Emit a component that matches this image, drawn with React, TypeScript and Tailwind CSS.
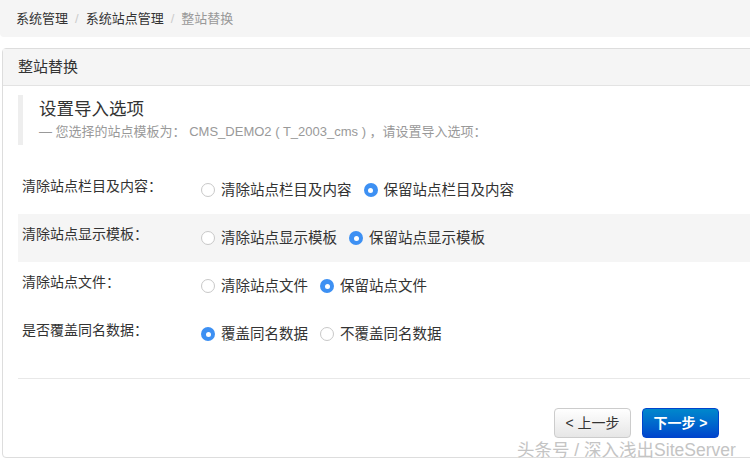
import { useState } from "react";

type Option = { label: string; value: string };
type Field = { name: string; title: string; options: Option[]; defaultValue: string };

const fields: Field[] = [
  {
    name: "deleteChannels",
    title: "清除站点栏目及内容：",
    options: [
      { label: "清除站点栏目及内容", value: "true" },
      { label: "保留站点栏目及内容", value: "false" },
    ],
    defaultValue: "false",
  },
  {
    name: "deleteTemplates",
    title: "清除站点显示模板：",
    options: [
      { label: "清除站点显示模板", value: "true" },
      { label: "保留站点显示模板", value: "false" },
    ],
    defaultValue: "false",
  },
  {
    name: "deleteFiles",
    title: "清除站点文件：",
    options: [
      { label: "清除站点文件", value: "true" },
      { label: "保留站点文件", value: "false" },
    ],
    defaultValue: "false",
  },
  {
    name: "isOverride",
    title: "是否覆盖同名数据：",
    options: [
      { label: "覆盖同名数据", value: "true" },
      { label: "不覆盖同名数据", value: "false" },
    ],
    defaultValue: "true",
  },
];

function Radio({ checked, label, onClick }: { checked: boolean; label: string; onClick: () => void }) {
  return (
    <div className="mr-[12px] flex h-[20px] cursor-pointer items-center" onClick={onClick}>
      {checked ? (
        <span className="mr-[6px] flex h-[14px] w-[14px] items-center justify-center rounded-full bg-[#3d90f3]">
          <span className="h-[5px] w-[5px] rounded-full bg-white" />
        </span>
      ) : (
        <span className="mr-[6px] h-[14px] w-[14px] rounded-full border border-[#c8c8c8] bg-white" />
      )}
      <span className="leading-[20px]">{label}</span>
    </div>
  );
}

function FieldRow({ field, striped }: { field: Field; striped: boolean }) {
  const [value, setValue] = useState(field.defaultValue);
  return (
    <div className={`flex h-[48px] items-start ${striped ? "bg-[#f5f5f5]" : ""}`}>
      <div className="mt-[10px] h-[20px] w-[183px] shrink-0 pl-[4px] leading-[20px]">{field.title}</div>
      <div className="mt-[14px] flex h-[20px] items-center text-[14.5px]">
        {field.options.map((option) => (
          <Radio
            key={option.value}
            label={option.label}
            checked={value === option.value}
            onClick={() => setValue(option.value)}
          />
        ))}
      </div>
    </div>
  );
}

export default function App() {
  return (
    <div
      className="relative h-[464px] w-[750px] overflow-hidden bg-white text-[14px] text-[#333]"
      style={{ fontFamily: '"Helvetica Neue", "Liberation Sans", "Noto Sans CJK SC", sans-serif' }}
    >
      <ul className="flex h-[37px] w-[760px] items-center rounded-b-[4px] bg-[#f5f5f5] pl-[16px] text-[13px]">
        <li>系统管理</li>
        <li className="px-[7px] text-[#ccc]">/</li>
        <li>系统站点管理</li>
        <li className="px-[7px] text-[#ccc]">/</li>
        <li className="text-[#999]">整站替换</li>
      </ul>

      <div className="ml-[2px] mt-[11px] w-[770px] rounded-[4px] border border-[#ddd] bg-white">
        <div className="flex h-[37px] items-center border-b border-[#e3e3e3] bg-[#f5f5f5] pl-[15px] text-[15px]">
          整站替换
        </div>

        <div className="pl-[15px]">
          <blockquote className="mt-[9px] border-l-[5px] border-[#eee] pb-[3px] pl-[16px] pt-[2px]">
            <p className="text-[17.5px] leading-[25px]">设置导入选项</p>
            <small className="block text-[13px] leading-[20px] text-[#999]">
              — 您选择的站点模板为： CMS_DEMO2 ( T_2003_cms ) ，请设置导入选项：
            </small>
          </blockquote>

          <div className="mt-[21px]">
            {fields.map((field, index) => (
              <FieldRow key={field.name} field={field} striped={index === 1} />
            ))}
          </div>

          <hr className="mt-[20px] border-t border-[#e8e8e8]" />

          <div className="flex justify-end gap-[11px] pb-[19px] pr-[52px] pt-[29px] text-[14px]">
            <button
              type="button"
              className="h-[30px] w-[77px] rounded-[4px] border border-[#ccc] bg-gradient-to-b from-white to-[#e6e6e6] text-[#333]"
            >
              &lt; 上一步
            </button>
            <button
              type="button"
              className="h-[30px] w-[77px] rounded-[4px] border border-[#0044cc] bg-gradient-to-b from-[#0088cc] to-[#0044cc] font-bold text-white"
            >
              下一步 &gt;
            </button>
          </div>
        </div>
      </div>

      <div
        className="absolute left-[517px] top-[439px] text-[17.5px] leading-[22px] text-[#c4c4c4]"
        style={{ textShadow: "0 0 2px #fff" }}
      >
        头条号 / 深入浅出SiteServer
      </div>
    </div>
  );
}
